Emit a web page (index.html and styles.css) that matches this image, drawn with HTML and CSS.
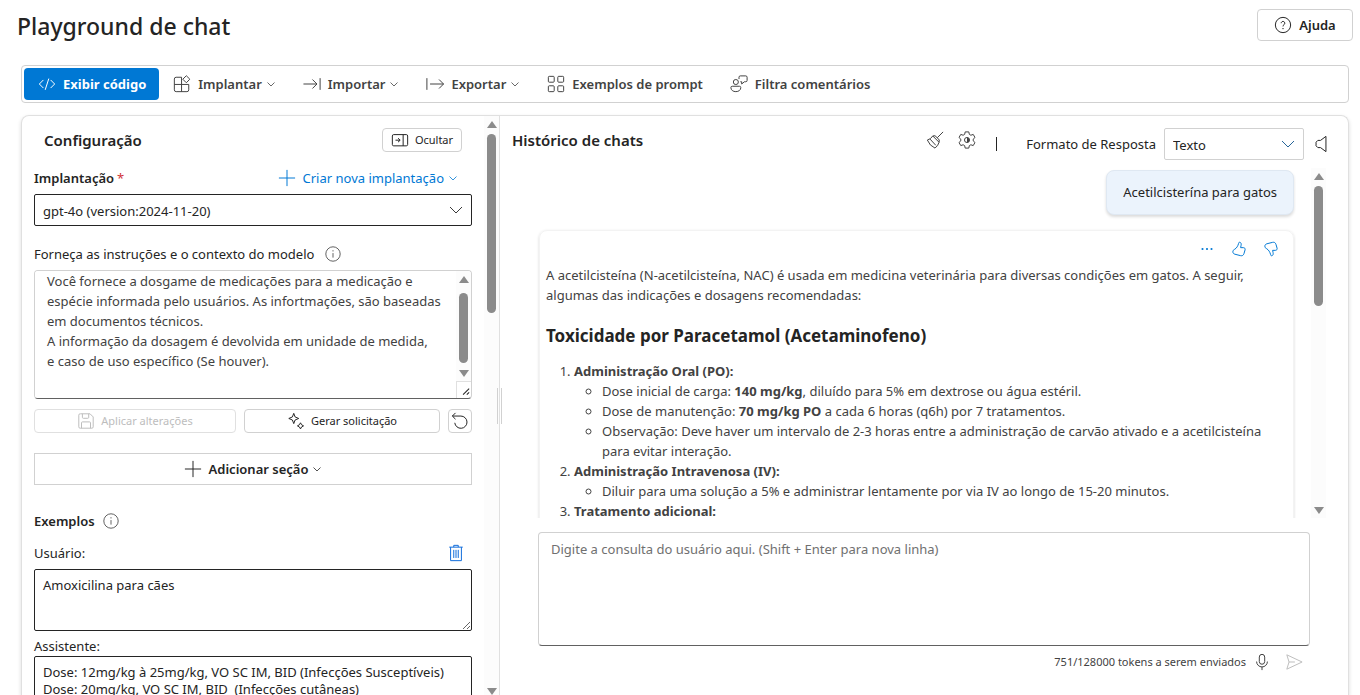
FILE: index.html
```html
<!DOCTYPE html>
<html lang="pt-BR">
<head>
<meta charset="utf-8">
<meta name="viewport" content="width=device-width, initial-scale=1">
<title>Playground de chat</title>
<link rel="stylesheet" href="styles.css">
</head>
<body>
<header class="page-header">
  <h1 class="page-title">Playground de chat</h1>
  <button class="btn help-btn" type="button">
    <svg class="icon" viewBox="0 0 20 20"><circle cx="10" cy="10" r="8.500"/><path d="M8 8a2 2 0 1 1 3.200 1.600c-.8.6-1.200 1-1.200 2"/><circle class="dot" cx="10" cy="14" r=".8"/></svg>
    Ajuda
  </button>
</header>

<nav class="toolbar" aria-label="Ações">
  <button class="tool tool-primary" type="button">
    <svg class="icon" viewBox="0 0 20 20"><path d="M6 5.500 1.500 10 6 14.500M14 5.500l4.500 4.500-4.500 4.500M12 4 8 16.500"/></svg>
    Exibir código
  </button>
  <button class="tool" type="button">
    <svg class="icon" viewBox="0 0 20 20"><path d="M9.500 2.500h-6a2 2 0 0 0-2 2v12a2 2 0 0 0 2 2h12a2 2 0 0 0 2-2v-6h-16M9.500 2.500v16M14.800.8l3.900 3.900-3.900 3.900-3.900-3.900z"/></svg>
    Implantar
    <svg class="chev" viewBox="0 0 10 10"><path d="M1.500 3.500 5 7l3.500-3.500"/></svg>
  </button>
  <button class="tool" type="button">
    <svg class="icon" viewBox="0 0 20 20"><path d="M.5 10h15M10.500 5l5 5-5 5M19 3.500v13"/></svg>
    Importar
    <svg class="chev" viewBox="0 0 10 10"><path d="M1.500 3.500 5 7l3.500-3.500"/></svg>
  </button>
  <button class="tool" type="button">
    <svg class="icon" viewBox="0 0 20 20"><path d="M1 3.500v13M4.500 10h15M14.500 5l5 5-5 5"/></svg>
    Exportar
    <svg class="chev" viewBox="0 0 10 10"><path d="M1.500 3.500 5 7l3.500-3.500"/></svg>
  </button>
  <button class="tool" type="button">
    <svg class="icon" viewBox="0 0 20 20"><rect x="1.500" y="1.500" width="6.500" height="6.500" rx="1"/><rect x="12" y="1.500" width="6.500" height="6.500" rx="1"/><rect x="1.500" y="12" width="6.500" height="6.500" rx="1"/><rect x="12" y="12" width="6.500" height="6.500" rx="1"/></svg>
    Exemplos de prompt
  </button>
  <button class="tool" type="button">
    <svg class="icon" viewBox="0 0 20 20"><circle cx="6.500" cy="7.800" r="2.800"/><path d="M2.500 12.500h8a1.500 1.500 0 0 1 1.500 1.500c0 2.800-2.400 4.500-5.500 4.500S1 16.800 1 14a1.500 1.500 0 0 1 1.500-1.500zM10 4.500V2.500A1.500 1.500 0 0 1 11.500 1h6A1.500 1.500 0 0 1 19 2.500v3.500a1.500 1.500 0 0 1-1.500 1.500h-1.500L13 10V7.500h-1.500"/></svg>
    Filtra comentários
  </button>
</nav>

<main class="workspace">
  <section class="config" aria-labelledby="config-title">
    <div class="config-body">
      <div class="config-head">
        <h2 class="panel-title" id="config-title">Configuração</h2>
        <button class="btn small-btn hide-btn" type="button">
          <svg class="icon" viewBox="0 0 20 20"><rect x="1.500" y="4" width="17" height="12.500" rx="1.500"/><path d="M13.500 4v12.500M5 10.200h5M7.800 8l2.400 2.200-2.400 2.200"/></svg>
          Ocultar
        </button>
      </div>

      <div class="label-row deploy-row">
        <label class="strong" for="deployment">Implantação<span class="required">*</span></label>
        <button class="link-btn" type="button">
          <svg class="icon" viewBox="0 0 20 20"><path d="M10 1v18M1 10h18"/></svg>
          Criar nova implantação
          <svg class="chev" viewBox="0 0 10 10"><path d="M1.500 3.500 5 7l3.500-3.500"/></svg>
        </button>
      </div>
      <div class="select-box select-dark">
        <select id="deployment"><option>gpt-4o (version:2024-11-20)</option></select>
        <svg class="select-chev" viewBox="0 0 14 14"><path d="M1 4 7 10l6-6"/></svg>
      </div>

      <div class="label-row context-row">
        <label for="context">Forneça as instruções e o contexto do modelo</label>
        <svg class="icon info" viewBox="0 0 20 20"><circle cx="10" cy="10" r="8"/><path d="M10 9v5"/><circle class="dot" cx="10" cy="6.500" r=".8"/></svg>
      </div>
      <div class="context-box">
        <textarea id="context">Você fornece a dosgame de medicações para a medicação e espécie informada pelo usuários. As infortmações, são baseadas em documentos técnicos.
A informação da dosagem é devolvida em unidade de medida,
e caso de uso específico (Se houver).</textarea>
        <div class="context-side">
          <div class="scrollbar"><i class="arrow up"></i><i class="thumb"></i><i class="arrow down"></i></div>
          <svg class="grip" viewBox="0 0 15 15"><path d="M6.500 12.500l6.500-6.500M10.500 12.500l2.500-2.500"/></svg>
        </div>
      </div>

      <div class="action-row">
        <button class="btn small-btn apply-btn" type="button" disabled>
          <svg class="icon" viewBox="0 0 20 20"><path d="M4 2h10.500L18 5.500V16.500A1.500 1.500 0 0 1 16.500 18H3.500A1.500 1.500 0 0 1 2 16.500v-13A1.500 1.500 0 0 1 3.500 2zM6 2v4a1 1 0 0 0 1 1h5a1 1 0 0 0 1-1V2M5 18v-6a1 1 0 0 1 1-1h8a1 1 0 0 1 1 1v6"/></svg>
          Aplicar alterações
        </button>
        <button class="btn small-btn generate-btn" type="button">
          <svg class="icon" viewBox="0 0 20 20"><path d="M7.500 1.500 9 5.500l4 1.700-4 1.700-1.500 4-1.500-4-4-1.700 4-1.700zM15 12l1.200 2.200 2.200 1.200-2.200 1.200L15 18.800l-1.200-2.200-2.200-1.200 2.200-1.200z"/></svg>
          Gerar solicitação
        </button>
        <button class="btn small-btn reset-btn" type="button" aria-label="Redefinir">
          <svg class="icon" viewBox="0 0 20 20"><path d="M5 1 1.500 4.500 5 8M1.500 4.500H11A6.800 6.800 0 1 1 4.200 12"/></svg>
        </button>
      </div>

      <button class="btn add-btn" type="button">
        <svg class="icon" viewBox="0 0 20 20"><path d="M10 1v18M1 10h18"/></svg>
        Adicionar seção
        <svg class="chev" viewBox="0 0 10 10"><path d="M1.500 3.500 5 7l3.500-3.500"/></svg>
      </button>

      <div class="label-row examples-row">
        <h3 class="strong">Exemplos</h3>
        <svg class="icon info" viewBox="0 0 20 20"><circle cx="10" cy="10" r="8"/><path d="M10 9v5"/><circle class="dot" cx="10" cy="6.500" r=".8"/></svg>
      </div>
      <div class="label-row user-row">
        <label for="user-example">Usuário:</label>
        <button class="icon-btn trash-btn" type="button" aria-label="Excluir exemplo">
          <svg class="icon" viewBox="0 0 20 20"><path d="M2.500 3.500h15M7.500 3.500v-2h5v2M4 3.500v15h12v-15M7.500 6.500v9M10 6.500v9M12.500 6.500v9"/></svg>
        </button>
      </div>
      <textarea class="example-input" id="user-example">Amoxicilina para cães</textarea>
      <label class="assistant-label" for="assistant-example">Assistente:</label>
      <textarea class="example-input example-answer" id="assistant-example">Dose: 12mg/kg à 25mg/kg, VO SC IM, BID (Infecções Susceptíveis)
Dose: 20mg/kg, VO SC IM, BID  (Infecções cutâneas)</textarea>
    </div>
    <div class="scrollbar"><i class="arrow up"></i><i class="thumb"></i><i class="arrow down"></i></div>
    <span class="splitter"></span>
  </section>

  <section class="chat" aria-labelledby="chat-title">
    <div class="chat-head">
      <h2 class="panel-title" id="chat-title">Histórico de chats</h2>
      <div class="chat-tools">
        <button class="icon-btn" type="button" aria-label="Limpar chat">
          <svg class="icon" viewBox="0 0 20 20"><path d="M19 1l-6.500 6.500M7.500 5.500l7 7M7.500 5.500Q10 4 12.500 7.500 16 10 14.500 12.500 13.500 16.500 10 19 4 16.500 1.500 10 5.500 9 7.500 5.500zM4.500 9l6.500 7"/></svg>
        </button>
        <button class="icon-btn" type="button" aria-label="Configurações">
          <svg class="icon" viewBox="0 0 20 20"><path d="M8 1h4l.6 2.700 1.700 1 2.600-.9 2 3.400-2 1.800v2l2 1.800-2 3.400-2.600-.9-1.700 1L12 19H8l-.6-2.700-1.700-1-2.600.9-2-3.400 2-1.800V9l-2-1.800 2-3.400 2.600.9 1.700-1z"/><circle cx="10" cy="10" r="2.800"/><path class="dot" d="M10 7.200a2.800 2.800 0 0 1 0 5.600z"/></svg>
        </button>
        <span class="separator"></span>
      </div>
      <div class="format">
        <label for="format">Formato de Resposta</label>
        <div class="select-box">
          <select id="format"><option>Texto</option></select>
          <svg class="select-chev" viewBox="0 0 14 14"><path d="M1 4 7 10l6-6"/></svg>
        </div>
        <button class="icon-btn" type="button" aria-label="Áudio">
          <svg class="icon" viewBox="0 0 20 20"><path d="M15.500 1.500v17L9.500 14H6.500L4.500 12V8l2-2h3z"/></svg>
        </button>
      </div>
    </div>

    <div class="history">
      <div class="messages">
        <p class="bubble">Acetilcisterína para gatos</p>
        <article class="answer">
          <div class="answer-tools">
            <button class="icon-btn" type="button" aria-label="Mais opções">
              <svg class="icon" viewBox="0 0 20 20"><g class="dot"><circle cx="5" cy="10" r="1.200"/><circle cx="10" cy="10" r="1.200"/><circle cx="15" cy="10" r="1.200"/></g></svg>
            </button>
            <button class="icon-btn" type="button" aria-label="Gostei">
              <svg class="icon" viewBox="0 0 20 20"><path d="M10.500 2.500c1.800 0 2.200 1.800 1.800 3.500l-.5 2.500h3c1.500 0 2.200 1 2 2.300l-1.300 4.400c-.6 1.900-1.900 2.600-3.700 2.200L5.500 15.800C4 15.400 3.200 14.500 3.200 13.200c0-1.500.6-2.200 2-2.900C7.500 9 8.800 6.500 9.500 4c.2-.9.300-1.500 1-1.500z"/></svg>
            </button>
            <button class="icon-btn" type="button" aria-label="Não gostei">
              <svg class="icon" viewBox="0 0 20 20"><path d="M10.500 17.500c1.800 0 2.200-1.800 1.800-3.500l-.5-2.500h3c1.500 0 2.200-1 2-2.300l-1.300-4.400c-.6-1.900-1.900-2.600-3.700-2.200L5.500 4.200C4 4.600 3.200 5.500 3.200 6.800c0 1.500.6 2.200 2 2.900C7.500 11 8.800 13.500 9.500 16c.2.9.300 1.500 1 1.500z"/></svg>
            </button>
          </div>
          <p>A acetilcisteína (N-acetilcisteína, NAC) é usada em medicina veterinária para diversas condições em gatos. A seguir, algumas das indicações e dosagens recomendadas:</p>
          <h3 class="answer-title">Toxicidade por Paracetamol (Acetaminofeno)</h3>
          <ol>
            <li><strong>Administração Oral (PO):</strong>
              <ul>
                <li>Dose inicial de carga: <strong>140 mg/kg</strong>, diluído para 5% em dextrose ou água estéril.</li>
                <li>Dose de manutenção: <strong>70 mg/kg PO</strong> a cada 6 horas (q6h) por 7 tratamentos.</li>
                <li>Observação: Deve haver um intervalo de 2-3 horas entre a administração de carvão ativado e a acetilcisteína para evitar interação.</li>
              </ul>
            </li>
            <li><strong>Administração Intravenosa (IV):</strong>
              <ul>
                <li>Diluir para uma solução a 5% e administrar lentamente por via IV ao longo de 15-20 minutos.</li>
              </ul>
            </li>
            <li><strong>Tratamento adicional:</strong></li>
          </ol>
        </article>
      </div>
      <div class="scrollbar"><i class="arrow up"></i><i class="thumb"></i><i class="arrow down"></i></div>
    </div>

    <div class="composer">
      <textarea class="query" aria-label="Consulta do usuário" placeholder="Digite a consulta do usuário aqui. (Shift + Enter para nova linha)"></textarea>
      <div class="composer-foot">
        <span class="tokens">751/128000 tokens a serem enviados</span>
        <button class="icon-btn" type="button" aria-label="Microfone">
          <svg class="icon" viewBox="0 0 20 20"><rect x="7" y="1.500" width="6" height="11" rx="3"/><path d="M4 9.500a6 6 0 0 0 12 0M10 15.500v3.500"/></svg>
        </button>
        <button class="icon-btn send-btn" type="button" aria-label="Enviar" disabled>
          <svg class="icon" viewBox="0 0 20 20"><path d="M2 2 19 10 2 18 4.500 10zM4.500 10H11"/></svg>
        </button>
      </div>
    </div>
  </section>
</main>
</body>
</html>
```

FILE: styles.css
```css
* {
  box-sizing: border-box;
}

body {
  margin: 0;
  height: 100vh;
  display: flex;
  flex-direction: column;
  overflow: hidden;
  background: #fff;
  color: #242424;
  font-family: "Noto Sans", "Open Sans", sans-serif;
  font-size: 13px;
  line-height: 20px;
}

h1, h2, h3, p {
  margin: 0;
}

button, select, textarea {
  font: inherit;
  color: inherit;
}

button {
  display: flex;
  align-items: center;
  justify-content: center;
  padding: 0;
  border: 0;
  background: none;
  white-space: nowrap;
}

.icon, .chev, .select-chev, .grip {
  flex: none;
  fill: none;
  stroke: currentColor;
  stroke-width: 1.1;
  stroke-linejoin: round;
}

.icon {
  width: 18px;
  height: 18px;
}

.chev {
  width: 10px;
  height: 10px;
  margin-left: -3px;
  stroke-width: 0.8;
}

.dot {
  fill: currentColor;
  stroke: none;
}

.strong {
  font-size: 13px;
  font-weight: 600;
}

.btn {
  border: 1px solid #d1d1d1;
  border-radius: 4px;
  background: #fff;
}

.small-btn {
  height: 24px;
  gap: 6px;
  font-size: 11px;
}

/* Header and toolbar */

.page-header {
  flex: none;
  display: flex;
  justify-content: space-between;
  align-items: flex-start;
  padding: 9px 7px 0 17px;
  height: 65px;
}

.page-title {
  font-size: 23px;
  line-height: 34px;
  font-weight: 500;
}

.help-btn {
  width: 96px;
  height: 32px;
  gap: 7px;
  font-weight: 600;
}

.toolbar {
  flex: none;
  display: flex;
  align-items: center;
  height: 38px;
  margin: 0 11px 0 21px;
  padding: 0 2px;
  border: 1px solid #d1d1d1;
  border-radius: 4px;
  color: #424242;
}

.tool {
  height: 32px;
  padding: 0 13px 0 14px;
  gap: 7px;
  font-weight: 600;
}

.tool-primary {
  border-radius: 4px;
  background: #0078d4;
  color: #fff;
  font-weight: 700;
}

/* Two-column workspace */

.workspace {
  flex: 1;
  min-height: 0;
  display: flex;
  margin: 12px 11px 0 21px;
  border: 1px solid #e0e0e0;
  border-bottom: 0;
  border-radius: 8px 8px 0 0;
  box-shadow: 0 2px 4px rgba(0, 0, 0, 0.14);
}

.scrollbar {
  flex: none;
  width: 15px;
  display: flex;
  flex-direction: column;
  align-items: center;
  padding: 5px 0 0;
  background: #fcfcfc;
}

.arrow {
  border: 5px solid transparent;
}

.up {
  border-top: 0;
  border-bottom: 7px solid #8b8b8b;
}

.down {
  margin-top: auto;
  border-bottom: 0;
  border-top: 7px solid #8b8b8b;
}

.thumb {
  width: 9px;
  margin-top: 6px;
  border-radius: 5px;
  background: #8b8b8b;
}

.config {
  position: relative;
  flex: 0 0 478px;
  min-width: 0;
  display: flex;
  border-right: 1px solid #e0e0e0;
}

.config > .scrollbar .thumb {
  height: 179px;
}

.splitter {
  position: absolute;
  top: 272px;
  right: -3px;
  width: 5px;
  height: 36px;
  border: solid #d1d1d1;
  border-width: 0 1px;
}

.config-body {
  flex: 1;
  min-width: 0;
  overflow: hidden;
  display: flex;
  flex-direction: column;
  padding: 12px 12px 0;
}

.config-body > * {
  flex: none;
}

.config-head {
  display: flex;
  align-items: center;
  justify-content: space-between;
  padding: 0 10px;
}

.panel-title {
  font-size: 15px;
  line-height: 24px;
  font-weight: 600;
}

.hide-btn {
  width: 80px;
}

.label-row {
  display: flex;
  align-items: center;
  height: 20px;
}

.deploy-row {
  margin: 16px 0 6px;
  justify-content: space-between;
}

.required {
  margin-left: 3px;
  color: #d13438;
  font-weight: 400;
}

.link-btn {
  gap: 7px;
  padding-right: 14px;
  color: #0078d4;
}

.select-box {
  display: grid;
  align-items: center;
  height: 32px;
  border: 1px solid #d1d1d1;
  border-radius: 2px;
}

.select-dark {
  border-color: #242424;
}

.select-box select {
  grid-area: 1 / 1;
  width: 100%;
  height: 30px;
  padding: 2px 8px 0;
  border: 0;
  background: none;
  appearance: none;
}

.select-chev {
  grid-area: 1 / 1;
  justify-self: end;
  width: 14px;
  height: 14px;
  margin-right: 8px;
  stroke-width: 0.9;
  pointer-events: none;
}

.format .select-chev {
  color: #0f548c;
}

.context-row {
  margin: 18px 0 6px;
  gap: 10px;
}

.info {
  color: #616161;
}

textarea {
  display: block;
  width: 100%;
  resize: none;
  background: #fff;
  outline: 0;
  overflow: hidden;
}

.context-box {
  display: flex;
  height: 129px;
  border: 1px solid #d1d1d1;
  border-bottom-color: #616161;
  border-radius: 4px;
  overflow: hidden;
}

.context-box textarea {
  flex: 1;
  min-width: 0;
  padding: 0 0 0 12px;
  border: 0;
  color: #424242;
}

.context-side {
  flex: none;
  display: flex;
  flex-direction: column;
}

.context-side .scrollbar {
  flex: 1;
  padding-bottom: 4px;
}

.context-side .thumb {
  height: 70px;
  margin-top: 10px;
}

.grip {
  width: 15px;
  height: 17px;
  border: solid #e0e0e0;
  border-width: 1px 0 0 1px;
}

.action-row {
  display: grid;
  grid-template-columns: 202fr 196fr 24px;
  gap: 8px;
  margin-top: 10px;
}

.apply-btn {
  border-color: #e0e0e0;
  color: #bdbdbd;
}

.add-btn {
  height: 32px;
  margin: 20px 0 26px;
  gap: 7px;
  border-radius: 0;
  font-weight: 600;
}

.examples-row {
  gap: 7px;
}

.user-row {
  margin: 12px 0 6px;
  justify-content: space-between;
}

.trash-btn {
  padding-right: 7px;
  color: #0f6cdb;
}

.example-input {
  height: 62px;
  padding: 7px 8px;
  border: 1px solid #242424;
  border-radius: 2px;
  line-height: 17px;
  resize: vertical;
}

.assistant-label {
  margin-top: 5px;
}

.example-answer {
  height: 80px;
}

/* Chat column */

.chat {
  flex: 1;
  min-width: 0;
  display: flex;
  flex-direction: column;
  padding: 12px 18px 0 12px;
}

.chat-head {
  flex: none;
  display: flex;
  align-items: flex-start;
  height: 40px;
}

.chat-tools {
  display: flex;
  align-items: center;
  gap: 14px;
  height: 24px;
  margin-left: auto;
  color: #424242;
}

.separator {
  width: 1px;
  height: 14px;
  margin: 7px 29px 0 6px;
  background: #242424;
}

.format {
  display: flex;
  align-items: center;
  gap: 8px;
}

.format .select-box {
  width: 140px;
}

.history {
  flex: 1;
  min-height: 0;
  display: flex;
  gap: 15px;
  padding: 0 4px 0 24px;
}

.messages {
  flex: 1;
  min-width: 0;
  display: flex;
  flex-direction: column;
  overflow: hidden;
  padding: 2px 2px 0 3px;
}

.messages > * {
  flex: none;
}

.bubble {
  align-self: flex-end;
  padding: 11px 16px 12px;
  border: 1px solid #dfe8f2;
  border-radius: 8px;
  background: #ebf3fc;
  box-shadow: 0 2px 3px rgba(0, 0, 0, 0.14);
}

.answer {
  margin-top: 15px;
  padding: 9px 6px;
  border: 1px solid #f3f3f3;
  border-radius: 8px;
  box-shadow: 0 1px 3px rgba(0, 0, 0, 0.16);
  color: #424242;
}

.answer-tools {
  display: flex;
  justify-content: flex-end;
  gap: 14px;
  height: 25px;
  padding-right: 7px;
  align-items: flex-start;
  color: #0078d4;
}

.answer-title {
  margin: 19px 0 13px;
  font-size: 17px;
  line-height: 24px;
  font-weight: 700;
  color: #242424;
}

.answer ol, .answer ul {
  margin: 0;
  padding-left: 28px;
}

.history .scrollbar {
  padding-bottom: 4px;
}

.history .thumb {
  height: 120px;
}

.composer {
  flex: none;
  padding: 14px 20px 20px 26px;
}

.query {
  height: 114px;
  padding: 6px 12px;
  border: 1px solid #d1d1d1;
  border-bottom-color: #616161;
  border-radius: 4px;
}

.query::placeholder {
  color: #707070;
}

.composer-foot {
  display: flex;
  align-items: center;
  justify-content: flex-end;
  gap: 7px;
  height: 26px;
  margin-top: 3px;
  padding-right: 7px;
  color: #424242;
}

.tokens {
  font-size: 11px;
}

.send-btn {
  margin-left: 7px;
  color: #bdbdbd;
}
```
